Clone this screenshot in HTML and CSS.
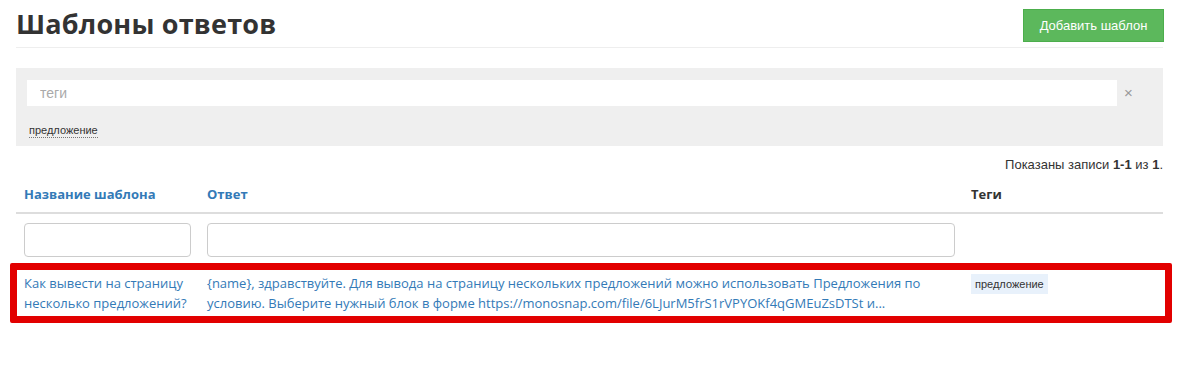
FILE: index.html
```html
<!DOCTYPE html>
<html lang="ru">
<head>
<meta charset="utf-8">
<title>Шаблоны ответов</title>
<link rel="stylesheet" href="styles.css">
</head>
<body>
<div class="page">
  <div class="page-header">
    <h1 class="title">Шаблоны ответов</h1>
    <button class="btn-add" type="button">Добавить шаблон</button>
  </div>

  <div class="filter-panel">
    <div class="tag-input-row">
      <input class="tag-input" type="text" placeholder="теги">
      <span class="clear">×</span>
    </div>
    <div class="tag-list">
      <span class="tag-link">предложение</span>
    </div>
  </div>

  <div class="summary">Показаны записи <b>1-1</b> из <b>1</b>.</div>

  <table class="grid">
    <colgroup>
      <col class="c1"><col class="c2"><col class="c3">
    </colgroup>
    <thead>
      <tr class="head">
        <th><a class="sort">Название шаблона</a></th>
        <th><a class="sort">Ответ</a></th>
        <th class="plain">Теги</th>
      </tr>
      <tr class="filters">
        <td><input class="f-input" type="text"></td>
        <td><input class="f-input" type="text"></td>
        <td></td>
      </tr>
    </thead>
  </table>

  <div class="marked">
    <table class="grid">
      <colgroup>
        <col class="c1"><col class="c2"><col class="c3">
      </colgroup>
      <tbody>
        <tr class="row">
          <td><a class="link">Как вывести на страницу несколько предложений?</a></td>
          <td><a class="link">{name}, здравствуйте. Для вывода на страницу нескольких предложений можно использовать Предложения по условию. Выберите нужный блок в форме https://monosnap.com/file/6LJurM5frS1rVPYOKf4qGMEuZsDTSt и...</a></td>
          <td><span class="chip">предложение</span></td>
        </tr>
      </tbody>
    </table>
  </div>
</div>
</body>
</html>
```

FILE: styles.css
```css
* { box-sizing: border-box; }
html, body { margin: 0; padding: 0; background: #fff; }
body {
  font-family: "Open Sans", "Liberation Sans", sans-serif;
  color: #333;
  min-height: 373px;
}
.page {
  width: 1147px;
  margin-left: 16px;
  padding-bottom: 40px;
}
.page-header {
  display: flex;
  justify-content: space-between;
  align-items: flex-start;
  padding-bottom: 5px;
  border-bottom: 1px solid #eeeeee;
}
.title {
  margin: 0;
  padding-top: 7px;
  font-size: 27px;
  line-height: 34px;
  font-weight: 700;
  color: #333;
  letter-spacing: 0.2px;
}
.btn-add {
  margin-top: 9px;
  width: 141px;
  height: 33px;
  margin-right: -1px;
  border: 1px solid #4cae4c;
  background: #5cb85c;
  color: #fff;
  font-family: "Liberation Sans", Arial, sans-serif;
  font-size: 13px;
  padding: 0;
  border-radius: 0;
}

.filter-panel {
  margin-top: 20px;
  background: #efefef;
  height: 78px;
  padding: 12px 11px 0 11px;
}
.tag-input-row {
  display: flex;
  align-items: center;
}
.tag-input {
  width: 1090px;
  height: 26px;
  border: none;
  background: #fff;
  padding: 0 13px;
  font-family: "Liberation Sans", Arial, sans-serif;
  font-size: 14px;
  outline: none;
}
.tag-input::placeholder { color: #aaa; }
.clear {
  margin-left: 7px;
  color: #999;
  font-family: "Liberation Sans", Arial, sans-serif;
  font-size: 15px;
  line-height: 20px;
}
.tag-list {
  margin-top: 11px;
  padding-left: 2px;
}
.tag-link {
  font-family: "Liberation Sans", Arial, sans-serif;
  font-size: 11px;
  color: #333;
  border-bottom: 1px dotted #777;
  line-height: 14px;
  display: inline-block;
}

.summary {
  margin-top: 10px;
  text-align: right;
  font-family: "Liberation Sans", Arial, sans-serif;
  font-size: 13px;
  line-height: 18px;
  color: #333;
}
.summary b { font-weight: 700; }

.grid {
  width: 1147px;
  border-collapse: collapse;
  table-layout: fixed;
}
.page > .grid { margin-top: 2px; }
.c1 { width: 183px; }
.c2 { width: 764px; }
.c3 { width: 200px; }
.grid th, .grid td {
  padding: 8px 8px;
  text-align: left;
  vertical-align: top;
  font-size: 13px;
  line-height: 20px;
}
.head th {
  border-bottom: 2px solid #dddddd;
  font-weight: 700;
}
.sort { color: #337ab7; text-decoration: none; }
.plain { color: #333; }
.filters td {
  padding-top: 9px;
  padding-bottom: 6px;
}
.f-input {
  display: block;
  width: 100%;
  height: 34px;
  border: 1px solid #ccc;
  border-radius: 4px;
  background: #fff;
}
.marked {
  border: 7px solid #e20000;
  border-radius: 2px;
  margin-left: -6px;
  width: 1162px;
}
.marked .grid { margin-left: -1px; }
.row td {
  padding-top: 3px;
  padding-bottom: 3px;
}
.link { color: #337ab7; text-decoration: none; }
.chip {
  display: inline-block;
  margin-top: 1px;
  background: #e8f1fb;
  color: #333;
  font-family: "Liberation Sans", Arial, sans-serif;
  font-size: 11px;
  line-height: 20px;
  padding: 0 4px;
}
```
